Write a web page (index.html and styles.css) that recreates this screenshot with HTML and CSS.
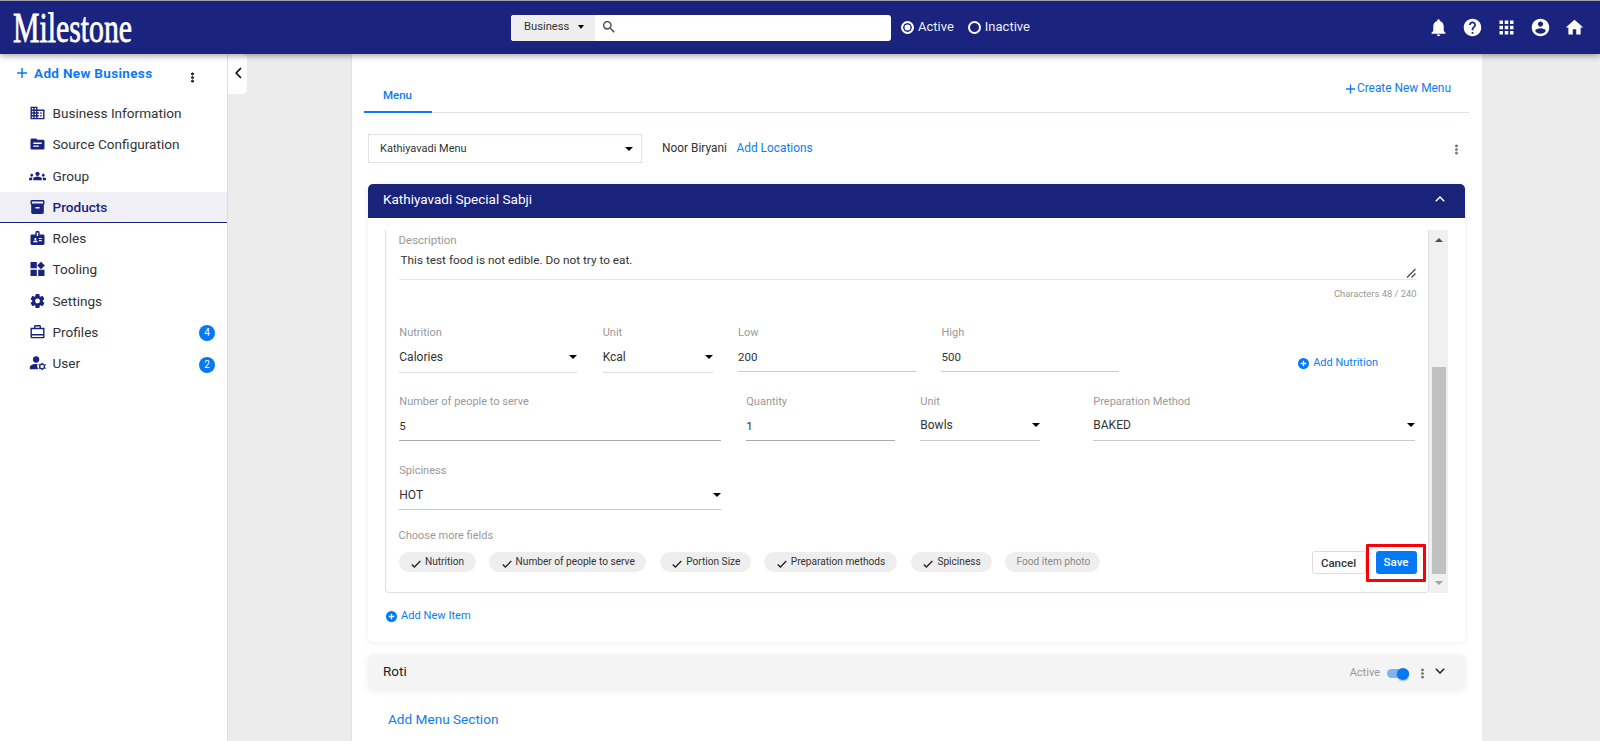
FILE: index.html
```html
<!DOCTYPE html>
<html lang="en">
<head>
  <meta charset="UTF-8" />
  <meta name="viewport" content="width=device-width, initial-scale=1.0"/>
  <title>Milestone - Products</title>
  <link rel="stylesheet" href="styles.css">
</head>
<body>
  <header class="topbar">
    <svg class="logo" width="126" height="53" viewBox="0 0 126 53">
      <text x="1" y="41" textLength="119" lengthAdjust="spacingAndGlyphs">Milestone</text>
    </svg>
    <div class="search">
      <div class="search-type">Business <i class="caret"></i></div>
      <svg class="search-icon" viewBox="0 0 24 24"><path d="M15.5 14h-.79l-.28-.27A6.47 6.47 0 0 0 16 9.500 6.500 6.500 0 1 0 9.500 16c1.610 0 3.090-.59 4.230-1.570l.27.28v.79l5 4.990L20.490 19l-4.990-5zm-6 0C7.010 14 5 11.990 5 9.500S7.010 5 9.500 5 14 7.010 14 9.500 11.990 14 9.500 14z"/></svg>
    </div>
    <div class="radios">
      <span class="radio checked"></span><span class="radio-label">Active</span>
      <span class="radio"></span><span class="radio-label">Inactive</span>
    </div>
    <div class="top-icons">
      <svg viewBox="0 0 24 24"><path d="M12 22c1.100 0 2-.9 2-2h-4c0 1.100.9 2 2 2zm6-6v-5c0-3.070-1.630-5.640-4.500-6.320V4c0-.83-.67-1.500-1.500-1.500s-1.500.67-1.500 1.500v.68C7.640 5.360 6 7.920 6 11v5l-2 2v1h16v-1l-2-2z"/></svg>
      <svg viewBox="0 0 24 24"><path d="M12 2C6.480 2 2 6.480 2 12s4.480 10 10 10 10-4.480 10-10S17.520 2 12 2zm1 17h-2v-2h2v2zm2.070-7.750-.9.92C13.450 12.900 13 13.500 13 15h-2v-.5c0-1.100.45-2.100 1.170-2.830l1.240-1.260c.37-.36.59-.86.59-1.410 0-1.100-.9-2-2-2s-2 .9-2 2H8c0-2.210 1.790-4 4-4s4 1.790 4 4c0 .88-.36 1.680-.93 2.250z"/></svg>
      <svg viewBox="0 0 24 24"><path d="M4 8h4V4H4v4zm6 12h4v-4h-4v4zm-6 0h4v-4H4v4zm0-6h4v-4H4v4zm6 0h4v-4h-4v4zm6-10v4h4V4h-4zm-6 4h4V4h-4v4zm6 6h4v-4h-4v4zm0 6h4v-4h-4v4z"/></svg>
      <svg viewBox="0 0 24 24"><path d="M12 2C6.480 2 2 6.480 2 12s4.480 10 10 10 10-4.480 10-10S17.520 2 12 2zm0 3c1.660 0 3 1.340 3 3s-1.340 3-3 3-3-1.340-3-3 1.340-3 3-3zm0 14.200c-2.500 0-4.710-1.280-6-3.220.03-1.990 4-3.080 6-3.080 1.990 0 5.970 1.090 6 3.080-1.290 1.940-3.500 3.220-6 3.220z"/></svg>
      <svg viewBox="0 0 24 24"><path d="M10 20v-6h4v6h5v-8h3L12 3 2 12h3v8z"/></svg>
    </div>
  </header>

  <div class="layout">
    <aside class="sidebar">
      <div class="add-business">
        <svg class="plus" viewBox="0 0 10 10"><path d="M5 0v10M0 5h10"/></svg>
        <span>Add New Business</span>
        <i class="kebab"></i>
      </div>
      <nav>
        <a class="nav-item">
          <svg viewBox="0 0 24 24"><path d="M12 7V3H2v18h20V7H12zM6 19H4v-2h2v2zm0-4H4v-2h2v2zm0-4H4V9h2v2zm0-4H4V5h2v2zm4 12H8v-2h2v2zm0-4H8v-2h2v2zm0-4H8V9h2v2zm0-4H8V5h2v2zm10 12h-8v-2h2v-2h-2v-2h2v-2h-2V9h8v10zm-2-8h-2v2h2v-2zm0 4h-2v2h2v-2z"/></svg>
          <span>Business Information</span>
        </a>
        <a class="nav-item">
          <svg viewBox="0 0 24 24"><path d="M20 6h-8l-2-2H4c-1.100 0-1.990.9-1.990 2L2 18c0 1.100.9 2 2 2h16c1.100 0 2-.9 2-2V8c0-1.100-.9-2-2-2zm-6 10H6v-2h8v2zm4-4H6v-2h12v2z"/></svg>
          <span>Source Configuration</span>
        </a>
        <a class="nav-item">
          <svg class="wide" viewBox="0 0 24 24"><path d="M12 12.750c1.630 0 3.070.39 4.240.9 1.080.48 1.760 1.560 1.760 2.730V18H6v-1.610c0-1.180.68-2.260 1.760-2.730 1.170-.52 2.610-.91 4.240-.91zM4 13c1.100 0 2-.9 2-2s-.9-2-2-2-2 .9-2 2 .9 2 2 2zm1.130 1.100C4.760 14.040 4.390 14 4 14c-.99 0-1.930.21-2.780.58A2.010 2.010 0 0 0 0 16.430V18h4.500v-1.610c0-.83.23-1.610.63-2.290zM20 13c1.100 0 2-.9 2-2s-.9-2-2-2-2 .9-2 2 .9 2 2 2zm4 3.430c0-.81-.48-1.530-1.220-1.850A6.950 6.950 0 0 0 20 14c-.39 0-.76.04-1.130.1.4.68.63 1.460.63 2.290V18H24v-1.570zM12 6c1.660 0 3 1.340 3 3s-1.340 3-3 3-3-1.340-3-3 1.340-3 3-3z"/></svg>
          <span>Group</span>
        </a>
        <a class="nav-item active">
          <svg viewBox="0 0 24 24"><path fill-rule="evenodd" d="M20 2H4c-1 0-2 .9-2 2v3.010c0 .72.43 1.340 1 1.690V20c0 1.100 1.100 2 2 2h14c.9 0 2-.9 2-2V8.700c.57-.35 1-.97 1-1.690V4c0-1.100-1-2-2-2zm-5 12H9v-2h6v2zm5-7H4V4h16v3z"/></svg>
          <span>Products</span>
        </a>
        <a class="nav-item">
          <svg viewBox="0 0 24 24"><path fill-rule="evenodd" d="M20 7h-5V4c0-1.100-.9-2-2-2h-2c-1.100 0-2 .9-2 2v3H4c-1.100 0-2 .9-2 2v11c0 1.100.9 2 2 2h16c1.100 0 2-.9 2-2V9c0-1.100-.9-2-2-2zM9 12c.83 0 1.500.67 1.500 1.500S9.830 15 9 15s-1.500-.67-1.500-1.500S8.170 12 9 12zm3 6H6v-.75c0-1 2-1.500 3-1.500s3 .5 3 1.500V18zm1-9h-2V4h2v5zm5 7.500h-4V15h4v1.500zm0-3h-4V12h4v1.500z"/></svg>
          <span>Roles</span>
        </a>
        <a class="nav-item">
          <svg viewBox="0 0 24 24"><path d="M2 2h9v9H2zM17 1.500l5.500 5.500-5.500 5.500L11.500 7zM2 13h9v9H2zM13 13h9v9h-9z"/></svg>
          <span>Tooling</span>
        </a>
        <a class="nav-item">
          <svg viewBox="0 0 24 24"><path d="M19.500 12c0-.23-.01-.45-.03-.68l1.860-1.410c.4-.3.51-.86.26-1.300l-1.870-3.230a1 1 0 0 0-1.250-.42l-2.150.91c-.37-.26-.76-.49-1.170-.68l-.29-2.310c-.06-.5-.49-.88-.99-.88h-3.730c-.51 0-.94.38-1 .88l-.29 2.310c-.41.19-.8.42-1.170.68l-2.150-.91c-.46-.2-1-.02-1.250.42L2.410 8.620c-.25.44-.14.99.26 1.300l1.860 1.410a7.340 7.340 0 0 0 0 1.350l-1.860 1.410c-.4.3-.51.86-.26 1.300l1.870 3.230c.25.44.79.62 1.250.42l2.150-.91c.37.26.76.49 1.170.68l.29 2.310c.06.5.49.88.99.88h3.730c.5 0 .93-.38.99-.88l.29-2.310c.41-.19.8-.42 1.170-.68l2.150.91c.46.2 1 .02 1.250-.42l1.870-3.230c.25-.44.14-.99-.26-1.300l-1.860-1.410c.03-.23.04-.45.04-.68zm-7.460 3.500a3.500 3.500 0 1 1 0-7 3.500 3.500 0 0 1 0 7z"/></svg>
          <span>Settings</span>
        </a>
        <a class="nav-item">
          <svg viewBox="0 0 24 24"><path fill-rule="evenodd" d="M17 6V4c0-1.100-.9-2-2-2H9c-1.100 0-2 .9-2 2v2H2v13c0 1.100.9 2 2 2h16c1.100 0 2-.9 2-2V6h-5zM9 4h6v2H9V4zm11 15H4v-2h16v2zm0-4H4V8h16v7z"/></svg>
          <span>Profiles</span>
          <b class="count">4</b>
        </a>
        <a class="nav-item">
          <svg viewBox="0 0 24 24"><circle cx="10" cy="7" r="4.500"/><path d="M12 13.500c-5-.9-11 .9-11 5V21h12.500c-2-2.300-2.300-5-1.500-7.500z"/><circle class="gear" cx="18.500" cy="17" r="3.400"/><path d="M17.700 11.700h1.600v2h-1.600zM17.700 20.300h1.600v2h-1.600zM13.400 14.900l.8-1.400 1.900 1-.8 1.400zM21.700 19.600l.8-1.400 1.700 1-.8 1.400zM13.400 19.200l1.800-1 .8 1.400-1.800 1zM21.600 14.500l1.800-1 .8 1.400-1.800 1z"/></svg>
          <span>User</span>
          <b class="count">2</b>
        </a>
      </nav>
    </aside>

    <div class="collapse">
      <svg viewBox="0 0 7 12"><path d="M6 1 1.200 6 6 11"/></svg>
    </div>

    <main class="panel">
      <div class="tabs">
        <div class="tab">Menu</div>
        <a class="create-menu"><svg class="plus" viewBox="0 0 10 10"><path d="M5 0v10M0 5h10"/></svg>Create New Menu</a>
      </div>

      <div class="menu-row">
        <div class="menu-select">Kathiyavadi Menu <i class="caret"></i></div>
        <span class="location">Noor Biryani</span>
        <a class="add-location">Add Locations</a>
        <i class="kebab grey"></i>
      </div>

      <section class="card">
        <div class="card-head">
          Kathiyavadi Special Sabji
          <svg class="chevron" viewBox="0 0 10 6"><path d="M.8 5.200 5 1l4.200 4.200"/></svg>
        </div>
        <div class="scroll-area">
          <div class="item">
            <div class="description">
              <label>Description</label>
              <div class="textarea">This test food is not edible. Do not try to eat.
                <svg class="resizer" viewBox="0 0 10 10"><path d="M1 9.500 9.500 1M5.500 9.500l4-4"/></svg>
              </div>
              <div class="char-count">Characters 48 / 240</div>
            </div>

            <div class="row nutrition">
              <div class="field light"><label>Nutrition</label><div class="value">Calories <i class="caret"></i></div></div>
              <div class="field light"><label>Unit</label><div class="value">Kcal <i class="caret"></i></div></div>
              <div class="field input"><label>Low</label><div class="value">200</div></div>
              <div class="field input"><label>High</label><div class="value">500</div></div>
              <a class="add-nutrition"><svg class="add-icon" viewBox="0 0 12 12"><circle cx="6" cy="6" r="6"/><path d="M6 3v6M3 6h6"/></svg>Add Nutrition</a>
            </div>

            <div class="row portion">
              <div class="field dark"><label>Number of people to serve</label><div class="value low">5</div></div>
              <div class="field dark"><label>Quantity</label><div class="value low">1</div></div>
              <div class="field"><label>Unit</label><div class="value">Bowls <i class="caret"></i></div></div>
              <div class="field"><label>Preparation Method</label><div class="value">BAKED <i class="caret"></i></div></div>
            </div>

            <div class="row spice">
              <div class="field"><label>Spiciness</label><div class="value low">HOT <i class="caret"></i></div></div>
            </div>

            <div class="more-label">Choose more fields</div>
            <div class="bottom">
              <div class="chip c1"><svg viewBox="0 0 10 8"><path d="M.7 4.500 3.400 7 9.300 1"/></svg>Nutrition</div>
              <div class="chip c2"><svg viewBox="0 0 10 8"><path d="M.7 4.500 3.400 7 9.300 1"/></svg>Number of people to serve</div>
              <div class="chip c3"><svg viewBox="0 0 10 8"><path d="M.7 4.500 3.400 7 9.300 1"/></svg>Portion Size</div>
              <div class="chip c4"><svg viewBox="0 0 10 8"><path d="M.7 4.500 3.400 7 9.300 1"/></svg>Preparation methods</div>
              <div class="chip c5"><svg viewBox="0 0 10 8"><path d="M.7 4.500 3.400 7 9.300 1"/></svg>Spiciness</div>
              <div class="chip off">Food item photo</div>
              <div class="actions">
                <button class="cancel">Cancel</button>
                <div class="highlight"><button class="save">Save</button></div>
              </div>
            </div>
          </div>
          <div class="scrollbar">
            <i class="arrow up"></i>
            <div class="thumb"></div>
            <i class="arrow down"></i>
          </div>
        </div>
        <a class="add-item"><svg class="add-icon" viewBox="0 0 12 12"><circle cx="6" cy="6" r="6"/><path d="M6 3v6M3 6h6"/></svg>Add New Item</a>
      </section>

      <section class="section-bar">
        <span class="title">Roti</span>
        <span class="state">Active</span>
        <span class="toggle"><i></i></span>
        <i class="kebab grey"></i>
        <svg class="chevron" viewBox="0 0 10 6"><path d="M.8.8 5 5 9.200.8"/></svg>
      </section>

      <a class="add-section">Add Menu Section</a>
    </main>
  </div>
</body>
</html>
```
FILE: styles.css
```css
* {
  box-sizing: border-box;
}
body {
  margin: 0;
  height: 741px;
  overflow: hidden;
  background-color: #ececec;
  color: #333;
  font-family: Roboto, "Liberation Sans", sans-serif;
  font-size: 12px;
  line-height: 16px;
}
svg {
  flex: none;
}
a {
  color: #0d7bf5;
}

/* top bar */
.topbar {
  position: relative;
  z-index: 2;
  display: flex;
  align-items: center;
  height: 54px;
  border-top: 1px solid #9fa0ab;
  background-color: #1a237e;
  box-shadow: 0 2px 6px rgba(0, 0, 0, 0.35);
}
.logo {
  margin-left: 12px;
  fill: #fff;
  font-family: "Liberation Serif", serif;
  font-size: 43px;
  stroke: #fff;
  stroke-width: 0.8;
}
.search {
  display: flex;
  align-items: center;
  width: 380px;
  height: 26px;
  margin-left: 373px;
  border-radius: 3px;
  background-color: #fff;
  overflow: hidden;
}
.search-type {
  display: flex;
  align-items: center;
  justify-content: space-between;
  width: 84px;
  height: 26px;
  padding: 0 11px 1px 13px;
  background-color: #eee;
  font-size: 11.200px;
}
.search-icon {
  width: 16px;
  height: 16px;
  margin: 0 0 2px 6px;
  fill: #444;
}
.caret {
  flex: none;
  border: 4.500px solid transparent;
  border-top-color: #000;
  border-bottom: 0;
}
.search-type .caret {
  border-width: 4px 3.500px 0;
}
.radios {
  display: flex;
  align-items: center;
  margin: 0 0 1px 10px;
  color: #eceef8;
  font-size: 13px;
}
.radio {
  width: 13px;
  height: 13px;
  border: 2px solid #fff;
  border-radius: 50%;
}
.radio.checked {
  background: #fff;
  box-shadow: inset 0 0 0 1.500px #1a237e;
}
.radio-label {
  margin: 0 14px 0 4px;
}
.top-icons {
  display: flex;
  gap: 13px;
  margin-left: auto;
  margin-right: 15.500px;
}
.top-icons svg {
  width: 21px;
  height: 21px;
  fill: #fff;
}

/* sidebar */
.layout {
  display: flex;
  height: 687px;
}
.sidebar {
  width: 228px;
  border-right: 1px solid #ddd;
  background-color: #fff;
}
.plus {
  width: 10px;
  height: 10px;
  fill: none;
  stroke: #0d7bf5;
  stroke-width: 1.500;
}
.add-business {
  display: flex;
  align-items: center;
  height: 44px;
  padding: 0 33px 6px 17px;
  color: #0d7bf5;
  font-size: 13.500px;
  font-weight: 700;
}
.add-business span {
  margin-left: 7px;
  letter-spacing: 0.330px;
}
.kebab {
  width: 3px;
  height: 11px;
  margin-left: auto;
  background: radial-gradient(circle, #222 1.200px, transparent 1.600px) 0 0 / 3px 3.700px;
}
.add-business .kebab {
  position: relative;
  top: 4px;
}
.kebab.grey {
  background-image: radial-gradient(circle, #777 1.100px, transparent 1.600px);
}
.nav-item {
  display: flex;
  align-items: center;
  height: 31.250px;
  padding: 0 12px 0 30px;
  border-bottom: 1px solid transparent;
  color: #333;
  font-size: 13.600px;
}
.nav-item svg {
  width: 15px;
  height: 16px;
  transform: scale(1.120);
  fill: #1a237e;
}
.nav-item svg.wide {
  transform: scale(1.150);
}
.nav-item .gear {
  fill: none;
  stroke: #1a237e;
  stroke-width: 1.800;
}
.nav-item span {
  margin-left: 7.500px;
}
.nav-item.active {
  border-bottom-color: #1a237e;
  background-color: #f0eff6;
  color: #1a237e;
  font-weight: 500;
}
.count {
  width: 16px;
  height: 16px;
  margin: 3px 0 0 auto;
  border-radius: 50%;
  background-color: #0479f6;
  color: #fff;
  font-size: 10px;
  font-weight: 400;
  text-align: center;
}
.collapse {
  display: flex;
  align-items: center;
  justify-content: center;
  width: 19px;
  height: 40px;
  padding-left: 1px;
  border-radius: 0 5px 5px 0;
  background-color: #fff;
}
.collapse svg {
  width: 7px;
  height: 12px;
  margin-bottom: 2px;
  fill: none;
  stroke: #111;
  stroke-width: 1.700;
}

/* main panel */
.panel {
  width: 1131px;
  margin-left: 104px;
  padding: 17px 17px 0 16px;
  border-left: 1px solid #e2e2e2;
  background-color: #fff;
}
.tabs {
  display: flex;
  align-items: flex-end;
  justify-content: space-between;
  height: 42px;
  margin: 0 -4px;
  padding-right: 18px;
  border-bottom: 1px solid #dee2e6;
}
.tab {
  width: 68px;
  height: 28px;
  margin-bottom: -1px;
  padding-right: 1px;
  border-bottom: 2px solid #0d7bf5;
  color: #0d7bf5;
  font-size: 11.500px;
  font-weight: 500;
  line-height: 21px;
  text-align: center;
}
.create-menu {
  display: flex;
  align-items: center;
  gap: 2px;
  margin-bottom: 16px;
  font-size: 11.900px;
}
.create-menu .plus {
  width: 9px;
  margin-top: 2px;
}
.menu-row {
  display: flex;
  align-items: center;
  height: 29px;
  margin-top: 21px;
}
.menu-select {
  display: flex;
  align-items: center;
  justify-content: space-between;
  width: 274px;
  height: 29px;
  padding: 0 8px 0 11px;
  border: 1px solid #dee2e6;
  font-size: 11px;
}
.location {
  margin: 0 9.500px 1px 20px;
  font-size: 11.900px;
}
.add-location {
  margin-bottom: 1px;
  font-size: 11.900px;
}
.menu-row .kebab {
  margin: 2px 7px 0 auto;
}
.card {
  height: 458px;
  margin-top: 21px;
  border-radius: 5px;
  box-shadow: 0 1px 6px rgba(0, 0, 0, 0.07);
}
.card-head {
  display: flex;
  align-items: center;
  justify-content: space-between;
  height: 34px;
  padding: 0 20px 4px 15px;
  border-radius: 5px 5px 0 0;
  background-color: #1a237a;
  color: #fff;
  font-size: 13.500px;
}
.chevron {
  width: 10px;
  height: 6px;
  fill: none;
  stroke: currentColor;
  stroke-width: 1.500;
}
.scroll-area {
  display: flex;
  width: 1063px;
  height: 363px;
  margin: 12px 0 0 17px;
}
.item {
  flex: 1;
  padding: 2px 11.500px 0 12.500px;
  border: 1px solid #dcdfe3;
  border-top: 0;
  border-radius: 0 0 4px 4px;
}
label, .more-label {
  display: block;
  height: 16px;
  padding-top: 1px;
  color: #999;
  font-size: 11px;
}
.description label {
  padding-top: 0;
  font-size: 11.500px;
}
.textarea {
  position: relative;
  height: 32px;
  padding: 4px 2px;
  border-bottom: 1px solid #e6e6e6;
  font-size: 11.800px;
}
.resizer {
  position: absolute;
  right: 1px;
  bottom: 1px;
  width: 10px;
  height: 10px;
  fill: none;
  stroke: #444;
  stroke-width: 1.200;
}
.char-count {
  margin-top: 6px;
  color: #999;
  font-size: 9.400px;
  line-height: 15px;
  text-align: right;
}
.row {
  display: grid;
  height: 49px;
  padding-left: 0.800px;
}
.nutrition {
  grid-template-columns: 178px 110px 178px 178px 1fr;
  gap: 25.400px;
  margin-top: 23px;
}
.portion {
  grid-template-columns: 322px 149px 120px 322px;
  column-gap: 25px;
  margin-top: 20px;
}
.portion .field:last-child {
  margin: 0 0 0 28px;
  width: 322px;
}
.spice {
  grid-template-columns: 322px;
  margin-top: 20px;
}
.value {
  display: flex;
  align-items: flex-start;
  justify-content: space-between;
  height: 32px;
  padding-top: 8px;
  border-bottom: 1px solid #c8c8c8;
}
.value .caret {
  margin: 6px 0 0;
}
.value.low {
  padding-top: 9px;
}
.light .value {
  height: 33px;
  padding-top: 9px;
  border-color: #ddd;
}
.input .value {
  padding-top: 9px;
  font-size: 11.500px;
}
.dark .value {
  border-color: #aaa;
  font-size: 11.500px;
}
.add-nutrition {
  display: flex;
  align-items: center;
  justify-self: end;
  height: 16px;
  margin: 31px 38.500px 0 0;
  font-size: 11px;
}
.add-icon {
  width: 11px;
  height: 11px;
  margin-right: 4px;
  fill: #0479f6;
}
.add-icon path {
  stroke: #fff;
  stroke-width: 1.400;
}
.more-label {
  margin-top: 16px;
}
.bottom {
  display: flex;
  align-items: flex-start;
  margin-top: 9px;
}
.chip {
  display: flex;
  align-items: center;
  height: 20px;
  margin-right: 13.600px;
  padding-left: 12.500px;
  border-radius: 10px;
  background-color: #eee;
  font-size: 10.150px;
  white-space: nowrap;
}
.chip svg {
  width: 10px;
  height: 8px;
  margin: 3px 4px 0 0;
  fill: none;
  stroke: #222;
  stroke-width: 1.300;
}
.c1 {
  width: 77px;
}
.c2 {
  width: 157px;
}
.c3 {
  width: 91px;
}
.c4 {
  width: 133px;
}
.c5 {
  width: 81px;
}
.chip.off {
  width: 95px;
  padding-left: 11px;
  color: #888;
}
.actions {
  display: flex;
  align-items: flex-start;
  height: 20px;
  margin: -8px -9px 0 auto;
}
button {
  font-family: inherit;
  font-size: 11.500px;
  font-weight: 500;
  line-height: 16px;
}
.cancel {
  width: 54px;
  height: 23px;
  margin-top: 7px;
  padding: 1px 0 0;
  border: 1px solid #dcdcdc;
  border-radius: 3px;
  background-color: #fff;
  color: #333;
}
.highlight {
  height: 38px;
  padding: 4px 6px 0 7px;
  border: 3px solid #fa0008;
  border-radius: 1px;
}
.save {
  display: block;
  width: 41px;
  height: 23px;
  padding: 0 0 1px;
  border: 0;
  border-radius: 3px;
  background-color: #0479f6;
  color: #fff;
}
.scrollbar {
  display: flex;
  flex-direction: column;
  align-items: center;
  width: 19px;
  padding: 8px 0;
  background-color: #f0f0f0;
}
.thumb {
  width: 14px;
  height: 209px;
  margin: 125px 0 7px;
  background-color: #c1c1c1;
}
.arrow {
  border: 4px solid transparent;
}
.arrow.up {
  border-top: 0;
  border-bottom-color: #505050;
}
.arrow.down {
  border-bottom: 0;
  border-top-color: #a3a3a3;
}
.add-item {
  display: flex;
  align-items: center;
  margin: 15px 0 0 18px;
  font-size: 11.100px;
}
.section-bar {
  display: flex;
  align-items: center;
  height: 35px;
  margin-top: 13px;
  padding: 0 20px 0 15px;
  border-radius: 5px;
  background-color: #f4f4f4;
  box-shadow: 0 1px 8px rgba(0, 0, 0, 0.07);
}
.section-bar .title {
  margin: 0 auto 3px 0;
  color: #222;
  font-size: 13.500px;
}
.section-bar .chevron {
  margin-bottom: 3px;
  color: #222;
}
.state {
  margin: 1px 7px 0 0;
  color: #999;
  font-size: 11px;
}
.toggle {
  width: 22px;
  height: 9px;
  margin: 2px 12px 0 0;
  border-radius: 5px;
  background-color: #7fb4f1;
}
.toggle i {
  display: block;
  width: 12px;
  height: 12px;
  margin: -1.500px 0 0 10px;
  border-radius: 50%;
  background-color: #0479f6;
  box-shadow: 0 1px 2px rgba(0, 0, 0, 0.3);
}
.section-bar .kebab {
  margin: 2px 11px 0 0;
}
.add-section {
  display: block;
  margin: 21px 0 0 20px;
  font-size: 13.600px;
}
```
